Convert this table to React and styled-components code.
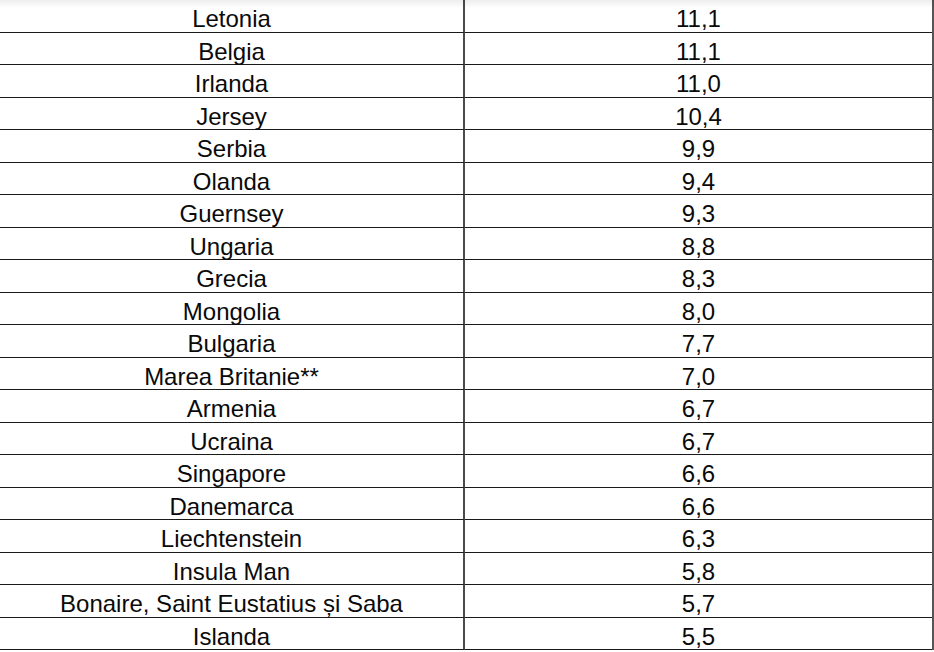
import React from "react";
import styled, { createGlobalStyle } from "styled-components";

const GlobalStyle = createGlobalStyle`
  html, body {
    margin: 0;
    padding: 0;
    background: #ffffff;
    overflow: hidden;
  }
  body {
    font-family: "Liberation Sans", Arial, sans-serif;
  }
`;

const Page = styled.div`
  position: relative;
  width: 934px;
  height: 652px;
  background: #ffffff;
  overflow: hidden;

  &::before {
    content: "";
    position: absolute;
    left: 0;
    right: 0;
    top: 0;
    height: 8px;
    background: linear-gradient(to bottom, rgba(0, 0, 0, 0.07), rgba(0, 0, 0, 0));
    pointer-events: none;
    z-index: 2;
  }
`;

const Table = styled.div`
  display: grid;
  grid-template-columns: 465px 467px;
  grid-auto-rows: 32.5px;
  width: 934px;
  border-right: 2px solid #555;
  box-sizing: border-box;
`;

const Cell = styled.div`
  display: flex;
  align-items: center;
  justify-content: center;
  box-sizing: border-box;
  padding-top: 7px;
  border-bottom: 1px solid #1a1a1a;
  border-right: ${(p) => (p.$divider ? "2px solid #4a4a4a" : "none")};
  font-size: 24px;
  line-height: 1;
  color: #0a0a0a;
  white-space: nowrap;
`;

const rows = [
  ["Letonia", "11,1"],
  ["Belgia", "11,1"],
  ["Irlanda", "11,0"],
  ["Jersey", "10,4"],
  ["Serbia", "9,9"],
  ["Olanda", "9,4"],
  ["Guernsey", "9,3"],
  ["Ungaria", "8,8"],
  ["Grecia", "8,3"],
  ["Mongolia", "8,0"],
  ["Bulgaria", "7,7"],
  ["Marea Britanie**", "7,0"],
  ["Armenia", "6,7"],
  ["Ucraina", "6,7"],
  ["Singapore", "6,6"],
  ["Danemarca", "6,6"],
  ["Liechtenstein", "6,3"],
  ["Insula Man", "5,8"],
  ["Bonaire, Saint Eustatius și Saba", "5,7"],
  ["Islanda", "5,5"],
];

export default function App() {
  return (
    <>
      <GlobalStyle />
      <Page>
        <Table>
          {rows.map(([country, value]) => (
            <React.Fragment key={country}>
              <Cell $divider>{country}</Cell>
              <Cell>{value}</Cell>
            </React.Fragment>
          ))}
        </Table>
      </Page>
    </>
  );
}
